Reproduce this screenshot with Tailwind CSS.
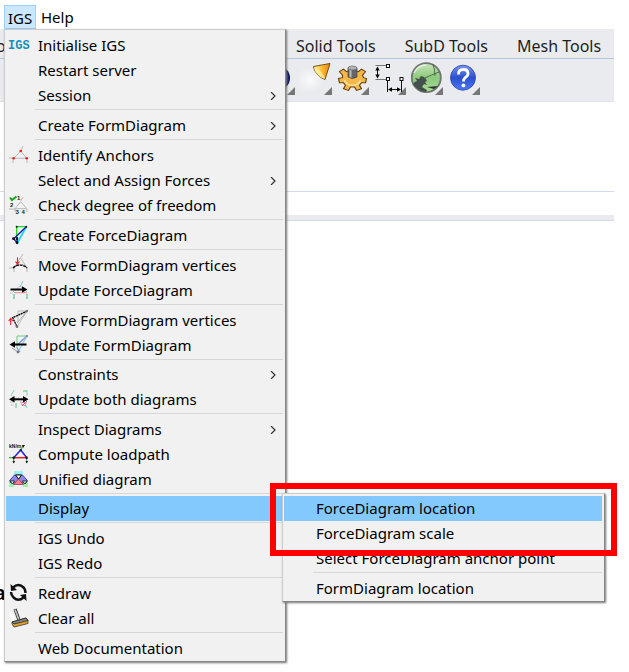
<!DOCTYPE html>
<html lang="en">
<head>
<meta charset="utf-8">
<title>IGS menu</title>
<script src="https://cdn.jsdelivr.net/npm/@tailwindcss/browser@4"></script>
</head>
<body class="bg-white font-['Noto_Sans','Open_Sans',sans-serif] text-[15px] leading-[25px] text-black">
<div class="relative min-h-screen overflow-hidden">

  <!-- Menu bar -->
  <nav class="flex h-[29px] items-end pl-1" aria-label="Menu bar">
    <button class="h-6 w-8 border border-[#99d1ff] bg-[#cce8ff] text-center">IGS</button>
    <button class="h-6 px-[5px]">Help</button>
  </nav>

  <!-- Tool tabs and toolbar -->
  <header class="mr-[15px] border-b border-[#dfe1ea] bg-[#eaebef]">
    <nav class="flex h-[30px] items-center gap-[29px] border-b border-[#b4c6dd] pt-1 text-base text-[#1e1e1e]" aria-label="Tool tabs">
      <a href="#" class="w-[267px] -indent-1">o</a>
      <a href="#">Solid Tools</a>
      <a href="#">SubD Tools</a>
      <a href="#">Mesh Tools</a>
    </nav>
    <div class="flex h-[42px] items-start pl-[258px] pt-px">
      <button class="w-[37px]" aria-label="Render">
        <svg class="h-9 w-[37px]" viewBox="0 0 37 36"><defs><radialGradient id="ball"><stop offset="0" stop-color="#8fa6f0"/><stop offset=".7" stop-color="#2340c0"/><stop offset="1" stop-color="#050a3c"/></radialGradient></defs><circle cx="20" cy="18" r="12" fill="url(#ball)"/><path d="M37 27v8h-8z" fill="#777"/></svg>
      </button>
      <button class="w-[37px]" aria-label="Spotlight">
        <svg class="h-9 w-[37px]" viewBox="0 0 37 36"><defs><linearGradient id="cone"><stop offset="0" stop-color="#fff3a0"/><stop offset=".5" stop-color="#ffbd38"/><stop offset="1" stop-color="#f08000"/></linearGradient><radialGradient id="glow"><stop offset="0" stop-color="#fff" stop-opacity=".7"/><stop offset="1" stop-color="#fff" stop-opacity="0"/></radialGradient></defs><ellipse cx="15" cy="20" rx="14" ry="13" fill="url(#glow)"/><path d="M18.500 6.500 35 3.500 30 19.500Q25 18 22 14 18.500 10 18.500 6.500z" fill="url(#cone)" stroke="#70501c" stroke-width="1"/><path d="M19 7Q24 9 27 13 30 16 30 19 25 18 22 14 19 11 19 7z" fill="#fff2a8" opacity=".7"/><path d="M37 27v8h-8z" fill="#777"/></svg>
      </button>
      <button class="w-[37px]" aria-label="Options">
        <svg class="h-9 w-[37px]" viewBox="0 0 37 36"><path d="M37 27v8h-8z" fill="#777"/><g transform="translate(20.500 18.500) scale(1 .85)"><path d="M-3-9-4-13 1-13 2-9 6-8 9-11 13-8 10-4 11-1 14 0 13 5 9 5 7 8 9 12 4 14 2 10-2 10-4 14-9 12-7 8-9 5-13 5-14 0-10-1-10-4-13-8-9-11-6-8z" fill="#f5b748" stroke="#65420f" stroke-width="1.200"/><path d="M-8 2Q-6 8 0 8T8 2" fill="none" stroke="#ffe09a" stroke-width="2"/></g><path d="M16 8v9q4.500 3 9 0V8z" fill="#66666a" stroke="#444" stroke-width=".7"/><path d="M18.500 9v8.500" stroke="#bbb" stroke-width="2"/><ellipse cx="20.500" cy="8" rx="4.500" ry="2" fill="#b4b4b8" stroke="#555" stroke-width=".6"/></svg>
      </button>
      <button class="w-[37px]" aria-label="Dimensions">
        <svg class="h-9 w-[37px]" viewBox="0 0 37 36"><path d="M37 27v8h-8z" fill="#777"/><g fill="none" stroke="#111"><path d="M6.500 5.500h10.500M6.500 19.500h10.500" stroke="#777"/><path d="M8.500 8v9M20 29.500h11"/><path d="M18.500 21v11M32.500 21v11"/><rect x="17.500" y="4.500" width="3" height="3" fill="#fff"/><rect x="17.500" y="17.500" width="3" height="3" fill="#fff"/><rect x="31" y="17.500" width="3" height="3" fill="#fff"/></g><path d="M8.500 6.500l2.200 4H6.300zM8.500 18.500l2.200-4H6.300zM19 29.500l4-2.200v4.400zM32 29.500l-4-2.200v4.400z"/></svg>
      </button>
      <button class="w-[37px]" aria-label="Grasshopper">
        <svg class="h-9 w-[37px]" viewBox="0 0 37 36"><defs><linearGradient id="green" x2="0" y2="1"><stop offset="0" stop-color="#c9e5bd"/><stop offset=".5" stop-color="#8cc97a"/><stop offset="1" stop-color="#a9dd98"/></linearGradient></defs><circle cx="20.300" cy="17.700" r="14.500" fill="url(#green)" stroke="#6d7670" stroke-width="1.800"/><path d="M7 24Q9 21 11 21L9 18 13 19 15 16 18 17 20 19 21 21 19 22 21 25 18 24 16 27 21 30 20 32Q11 31 7 24z" fill="#46504a"/><path d="M19 18Q25 15 33 12M27 4Q29 10 29 16" fill="none" stroke="#46604a" stroke-width=".9"/><path d="M21 27l11-1-4 3z" fill="#333"/><path d="M8 13Q12 5 20 5" fill="none" stroke="#eef8ea" stroke-width="1.500" opacity=".8"/><path d="M37 27v8h-8z" fill="#777"/></svg>
      </button>
      <button class="w-[37px]" aria-label="Help topics">
        <svg class="h-9 w-[37px]" viewBox="0 0 37 36"><defs><linearGradient id="blue" x2="0" y2="1"><stop offset="0" stop-color="#7a97ea"/><stop offset=".5" stop-color="#2b4fcf"/><stop offset="1" stop-color="#4d7af0"/></linearGradient></defs><circle cx="20" cy="17.700" r="12.500" fill="url(#blue)" stroke="#2843ae" stroke-width=".8"/><path d="M15.700 14.500Q15 9.500 20.500 9.500 25 9.500 25 13.500 25 16 22 17.800 20.500 19 20.500 21.500" fill="none" stroke="#fff" stroke-width="2.800"/><circle cx="20.400" cy="25.400" r="1.900" fill="#fff"/><path d="M37 27v8h-8z" fill="#777"/></svg>
      </button>
    </div>
  </header>

  <!-- Command area -->
  <main class="mr-[15px]">
    <div class="h-[90px] border-b border-[#d5d9e9]"></div>
    <div class="mt-[23px] h-[6px] border-b border-[#d5d9e9] bg-[#eaebef]"></div>
    <p class="-ml-[6px] pt-[358px] text-xl font-semibold">a</p>
  </main>

  <!-- IGS drop-down -->
  <div class="absolute left-1 top-[29px] w-[282px] border border-[#ccc] border-b-[#858585] border-r-[#858585] bg-[#f1f1f1] pl-px pr-[2px] pt-[3px] shadow-[1px_1px_2px_#777]" role="menu">
    <button class="flex h-[25px] w-full items-center pl-[2px]">
      <span class="w-[30px] text-left font-['Liberation_Mono',monospace] text-[12px] leading-5 font-bold text-[#168fbd]" aria-hidden="true">IGS</span>Initialise IGS</button>
    <button class="flex h-[25px] w-full items-center pl-8">Restart server</button>
    <button class="flex h-[25px] w-full items-center justify-between pl-8 pr-[7px]">Session<svg class="h-2 w-[6px]" viewBox="0 0 6 8" fill="none" stroke="#333" stroke-width="1.200"><path d="M1 0l4 4-4 4"/></svg></button>
    <hr class="mb-[3px] ml-[29px] mt-px border-[#d7d7d7]">
    <button class="flex h-[25px] w-full items-center justify-between pl-8 pr-[7px]">Create FormDiagram<svg class="h-2 w-[6px]" viewBox="0 0 6 8" fill="none" stroke="#333" stroke-width="1.200"><path d="M1 0l4 4-4 4"/></svg></button>
    <hr class="mb-[3px] ml-[29px] mt-px border-[#d7d7d7]">
    <button class="flex h-[25px] w-full items-center gap-[9px] pl-[3px]">
      <svg class="h-5 w-5 overflow-visible" viewBox="0 0 20 20" fill="none"><path d="M4.700 12.300 11.700 5l6 7.300zM0 12h4M4 13v4M18 13v4M12 5l2-5" stroke="#aaa" stroke-width=".8"/><g fill="#f21b1b"><circle cx="11.700" cy="5" r="1.300"/><circle cx="4.700" cy="12.300" r="1.300"/><circle cx="17.700" cy="12.300" r="1.300"/></g></svg>Identify Anchors</button>
    <button class="flex h-[25px] w-full items-center justify-between pl-8 pr-[7px]">Select and Assign Forces<svg class="h-2 w-[6px]" viewBox="0 0 6 8" fill="none" stroke="#333" stroke-width="1.200"><path d="M1 0l4 4-4 4"/></svg></button>
    <button class="flex h-[25px] w-full items-center gap-[9px] pl-[3px]">
      <svg class="h-5 w-5 overflow-visible" viewBox="0 0 20 20" fill="none"><path d="M6 12.700 11.700 5.700l6 7zM11.700 5 14 1M0 13h6M6 13v3M18 13v3" stroke="#aaa" stroke-width=".8"/><path d="M1 1.500 3 4 7.500.5" stroke="#10a71c" stroke-width="2"/><g fill="#222" font-family="Liberation Sans" font-weight="bold" font-size="6"><text x="8" y="4">1</text><text x="1" y="10.500">2</text><text x="6.500" y="18">3</text><text x="12.500" y="18">4</text></g></svg>Check degree of freedom</button>
    <hr class="mb-[3px] ml-[29px] mt-px border-[#d7d7d7]">
    <button class="flex h-[25px] w-full items-center gap-[9px] pl-[3px]">
      <svg class="h-5 w-5 overflow-visible" viewBox="0 0 20 20" fill="none"><path d="M17.300.7H7.700v12" stroke="#18df18" stroke-width="1.300"/><path d="M17.300.7 8.500 16.700" stroke="#20dcea" stroke-width="1.800"/><path d="M17.300.7 4.700 12.700l3.500 4V11" stroke="#1919bd" stroke-width="1.400"/><g fill="#111"><circle cx="7.700" cy=".7" r="1"/><circle cx="17.300" cy=".7" r="1"/><circle cx="4.500" cy="12.700" r="1.400"/><circle cx="8" cy="12.700" r="1.200"/><circle cx="8" cy="16.700" r="1.400"/></g></svg>Create ForceDiagram</button>
    <hr class="mb-[3px] ml-[29px] mt-px border-[#d7d7d7]">
    <button class="flex h-[25px] w-full items-center gap-[9px] pl-[3px]">
      <svg class="h-5 w-5 overflow-visible" viewBox="0 0 20 20" fill="none"><path d="M5 12 11.500 1.500 18 12M0 12h5M5 12v4M18 12v4M12 1l2-3" stroke="#aaa" stroke-width=".8"/><path d="M4 12Q8 8.500 11 9 15 9 18 12" stroke="#111" stroke-width="1.600" stroke-dasharray="3 .7"/><path d="M8.500 1.500v6M6.500 5.500l2 2.500 2-2.500" stroke="#e81c24" stroke-width="1.100"/></svg>Move FormDiagram vertices</button>
    <button class="flex h-[25px] w-full items-center gap-[9px] pl-[3px]">
      <svg class="h-5 w-5 overflow-visible" viewBox="0 0 20 20" fill="none"><path d="M5 11.700h13" stroke="#ef8b8b"/><path d="M5 13v5M18 13v5" stroke="#37b875"/><path d="M11 6 14 0" stroke="#83c7d6"/><path d="M1 12h3M4 11 11 5l7 6" stroke="#aaa" stroke-dasharray="1.500 1"/><path d="M1.500 8.500H14" stroke="#000" stroke-width="2"/><path d="M18.500 8.500 13 5.300v6.400z" fill="#000"/></svg>Update ForceDiagram</button>
    <hr class="mb-[3px] ml-[29px] mt-px border-[#d7d7d7]">
    <button class="flex h-[25px] w-full items-center gap-[9px] pl-[3px]">
      <svg class="h-5 w-5 overflow-visible" viewBox="0 0 20 20" fill="none"><path d="M18.300 0H9v11M18 0 8 15.700M18 0 8 12" stroke="#aaa" stroke-width=".8"/><path d="M18.300 0 3.700 6.700 8 15.700" stroke="#111" stroke-width="1.400" stroke-dasharray="2 .6"/><circle cx="18" cy="0" r="1.200" fill="#777"/><circle cx="8" cy="15.700" r="1.400" fill="#777"/><path d="M1.700 14V8M-.3 10l2-2.500 2 2.500" stroke="#e81c24" stroke-width="1.100"/></svg>Move FormDiagram vertices</button>
    <button class="flex h-[25px] w-full items-center gap-[9px] pl-[3px]">
      <svg class="h-5 w-5 overflow-visible" viewBox="0 0 20 20" fill="none"><path d="M18 0H8v12" stroke="#66cc82"/><path d="M18 0 8 9M8 12l3 4" stroke="#8487df" stroke-width="1.200"/><path d="M18 0 9 16" stroke="#85d6db" stroke-width="1.200"/><path d="M3 12l6 4" stroke="#999"/><circle cx="18" cy="0" r="1" fill="#777"/><circle cx="9" cy="16" r="1.400" fill="#777"/><path d="M5 8.500h12.500" stroke="#000" stroke-width="2"/><path d="M.5 8.500 6 5.300v6.400z" fill="#000"/></svg>Update FormDiagram</button>
    <hr class="mb-[2px] ml-[29px] mt-px border-[#d7d7d7]">
    <button class="flex h-[25px] w-full items-center justify-between pl-8 pr-[7px]">Constraints<svg class="h-2 w-[6px]" viewBox="0 0 6 8" fill="none" stroke="#333" stroke-width="1.200"><path d="M1 0l4 4-4 4"/></svg></button>
    <button class="flex h-[25px] w-full items-center gap-[9px] pl-[3px]">
      <svg class="h-5 w-5 overflow-visible" viewBox="0 0 20 20" fill="none"><path d="M2 6 5 0M18 0v6M16 13l2 5" stroke="#7fd0d0"/><path d="M14 1h4M7 13v5" stroke="#55c978"/><path d="M1 12h4l5-5M2 15h3" stroke="#aaa" stroke-dasharray="1.500 1"/><path d="M11 12l7 1M12 14l5 2" stroke="#ea8080"/><path d="M18 11l-5 5" stroke="#8888df"/><path d="M5 9.300h10" stroke="#000" stroke-width="2"/><path d="M0 9.300 5.500 6v6.600zM19.500 9.300 14 6v6.600z" fill="#000"/></svg>Update both diagrams</button>
    <hr class="mb-[3px] ml-[29px] mt-px border-[#d7d7d7]">
    <button class="flex h-[25px] w-full items-center justify-between pl-8 pr-[7px]">Inspect Diagrams<svg class="h-2 w-[6px]" viewBox="0 0 6 8" fill="none" stroke="#333" stroke-width="1.200"><path d="M1 0l4 4-4 4"/></svg></button>
    <button class="flex h-[25px] w-full items-center gap-[9px] pl-[3px]">
      <svg class="h-5 w-5 overflow-visible" viewBox="0 0 20 20" fill="none"><text x="0" y="3" fill="#111" font-family="Liberation Sans" font-weight="bold" font-size="5">kN/m</text><path d="M12 5 14 1M0 12.700h4" stroke="#28c13c" stroke-width="1.200"/><path d="M4.700 12.700 11.700 5l6 7.700" stroke="#2424e8" stroke-width="1.500"/><path d="M4.700 12.700h13" stroke="#ed1c24" stroke-width="1.500"/><path d="M4.700 13v5M17.700 13v5" stroke="#26943a"/><g fill="#111"><circle cx="11.700" cy="5" r="1"/><circle cx="4.700" cy="12.700" r="1.200"/><circle cx="17.700" cy="12.700" r="1.200"/><path d="M3.500 16h2.500l-1.200 2.500zM16.500 16h2.500l-1.200 2.500zM13 0h3l-2 3z"/></g></svg>Compute loadpath</button>
    <button class="flex h-[25px] w-full items-center gap-[9px] pl-[3px]">
      <svg class="h-5 w-5 overflow-visible" viewBox="0 0 20 20"><path d="M5 1h9v4H5z" fill="#9cf1f3"/><path d="M0 11h5v6H0zM14 11h5v6h-5z" fill="#a1f3a9"/><path d="M.5 10.500 5.500 5h8l5 5.500L17 13H2z" fill="#8b87e6" stroke="#3330a6" stroke-width=".8"/><path d="M4.500 14.500 9.500 9l5 5.500z" fill="#fa8585" stroke="#9b2f58" stroke-width=".8"/><path d="M6.500 5h6l-3 4z" fill="#fff" stroke="#111"/><path d="M1 11h4.500l-2 3zM13.500 11H18l-2 3z" fill="#dfe" stroke="#111" stroke-width=".8"/></svg>Unified diagram</button>
    <hr class="mb-[2px] ml-[29px] mt-px border-[#d7d7d7]">
    <div class="relative">
      <button class="flex h-[25px] w-full items-center bg-[#84c9fd] pl-8" aria-expanded="true">Display</button>
      <!-- Display submenu -->
      <div class="absolute -top-[3px] left-[276px] w-[323px] border border-[#ccc] border-b-[#858585] border-r-[#858585] bg-[#f1f1f1] pl-px pr-[2px] pt-[2px] shadow-[1px_1px_2px_#777]" role="menu">
        <button class="flex h-[25px] w-full items-center bg-[#84c9fd] pl-8">ForceDiagram location</button>
        <button class="flex h-[25px] w-full items-center pl-8">ForceDiagram scale</button>
        <button class="flex h-[25px] w-full items-center pl-8">Select ForceDiagram anchor point</button>
        <hr class="mb-[3px] ml-[29px] mt-px border-[#d7d7d7]">
        <button class="flex h-[25px] w-full items-center pl-8">FormDiagram location</button>
      </div>
      <!-- Highlight frame around the ForceDiagram commands -->
      <div class="pointer-events-none absolute -top-[13px] left-[264px] h-[73px] w-[347px] border-6 border-[#fe0000]"></div>
    </div>
    <hr class="mb-[3px] ml-[29px] mt-px border-[#d7d7d7]">
    <button class="flex h-[25px] w-full items-center pl-8">IGS Undo</button>
    <button class="flex h-[25px] w-full items-center pl-8">IGS Redo</button>
    <hr class="mb-[3px] ml-[29px] mt-px border-[#d7d7d7]">
    <button class="flex h-[25px] w-full items-center gap-[9px] pl-[3px]">
      <svg class="h-5 w-5 overflow-visible" viewBox="0 0 20 20" fill="none"><path d="M4 3.500Q9-1 14 3 16.500 5 16.500 9M14.500 13.500Q9.500 18 4.500 13.500 2 11 2 8" stroke="#111" stroke-width="2.400"/><path d="M1.500 0 2 7 8 6zM17.500 17 17 10 11 11z" fill="#111"/></svg>Redraw</button>
    <button class="flex h-[25px] w-full items-center gap-[9px] pl-[3px]">
      <svg class="h-5 w-5 overflow-visible" viewBox="0 0 20 20" fill="none"><path d="M0 3l5 3 1 7-4-3z" fill="#fff"/><path d="M6 0 10 11" stroke="#333" stroke-width="3.200"/><path d="M6 .5 10 11" stroke="#ccc" stroke-width="1.500"/><path d="M3 13 17 9l2 2.500v3L5 18l-2-3z" fill="#e3a42c" stroke="#333" stroke-width=".8"/><path d="M3 13 17 9l2 2.500L5 15z" fill="#888" stroke="#222" stroke-width=".8"/></svg>Clear all</button>
    <hr class="mb-[3px] ml-[29px] mt-px border-[#d7d7d7]">
    <button class="flex h-[25px] w-full items-center pl-8">Web Documentation</button>
  </div>
</div>
</body>
</html>
